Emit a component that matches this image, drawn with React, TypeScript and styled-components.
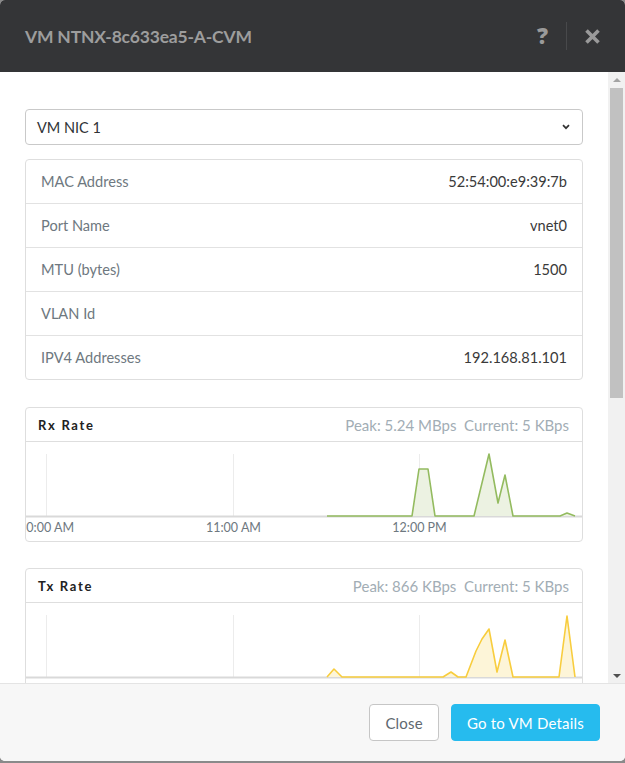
import React from 'react'
import styled, { createGlobalStyle } from 'styled-components'

interface IPoint {
  x: number,
  y: number
}

interface IChart {
  title: string,
  peak: string,
  current: string,
  line: string,
  fill: string,
  points: Array<IPoint>
}

interface IRow {
  label: string,
  value: string
}

const GlobalStyle = createGlobalStyle`
  html, body {
    margin: 0;
    padding: 0;
    background: #8a8a8a;
  }
  body {
    font-family: Lato, "Open Sans", "Liberation Sans", sans-serif;
  }
`;

const Modal = styled.div`
  display: flex;
  flex-direction: column;
  width: 625px;
  height: 761px;
  background: #fff;
  border-radius: 5px;
  overflow: hidden;
`;

const Header = styled.div`
  flex: 0 0 72px;
  display: flex;
  align-items: center;
  justify-content: space-between;
  background: #343537;
  padding: 0 20px 0 25px;
`;

const Title = styled.div`
  color: #9d9d9d;
  font-size: 17.5px;
  font-weight: 700;
  letter-spacing: -0.2px;
`;

const HeaderActions = styled.div`
  display: flex;
  align-items: center;
  height: 100%;
`;

const HelpIcon = styled.span`
  color: #9a9a9a;
  font-family: "Open Sans", sans-serif;
  font-size: 22px;
  font-weight: 800;
  padding: 0 18px 2px 0;
`;

const Divider = styled.div`
  width: 1px;
  height: 28px;
  background: #48494b;
`;

const CloseIcon = styled.div`
  display: flex;
  padding: 0 4px 0 17px;
`;

const Body = styled.div`
  flex: 1;
  display: flex;
  min-height: 0;
`;

const Content = styled.div`
  flex: 1;
  overflow: hidden;
  padding: 37px 25px 0 25px;
  display: flex;
  flex-direction: column;
`;

const ScrollTrack = styled.div`
  flex: 0 0 17px;
  display: flex;
  flex-direction: column;
  background: #f1f1f1;
`;

const ScrollArrow = styled.div<{ down?: boolean }>`
  flex: 0 0 15px;
  display: flex;
  align-items: center;
  justify-content: center;
  &::before {
    content: '';
    border-left: 4px solid transparent;
    border-right: 4px solid transparent;
    border-${props => props.down ? 'top' : 'bottom'}: 4px solid ${props => props.down ? '#505050' : '#a3a3a3'};
  }
`;

const ScrollThumb = styled.div`
  flex: 0 0 310px;
  margin: 1px 2px 0 2px;
  background: #c1c1c1;
`;

const ScrollRest = styled.div`
  flex: 1;
`;

const Select = styled.div`
  display: flex;
  align-items: center;
  justify-content: space-between;
  flex: 0 0 auto;
  height: 34px;
  border: 1px solid #c9c9c9;
  border-radius: 4px;
  padding: 0 12px 0 11px;
  color: #2f3336;
  font-size: 14.5px;
`;

const InfoCard = styled.div`
  flex: 0 0 auto;
  margin-top: 14px;
  border: 1px solid #dedede;
  border-radius: 4px;
`;

const InfoRow = styled.div`
  display: flex;
  align-items: center;
  justify-content: space-between;
  height: 43px;
  padding: 0 15px;
  font-size: 14.6px;
  & + & {
    border-top: 1px solid #e2e2e2;
  }
`;

const RowLabel = styled.span`
  color: #6e7880;
`;

const RowValue = styled.span`
  color: #3a3a3a;
`;

const ChartCard = styled.div`
  flex: 0 0 auto;
  margin-top: 27px;
  border: 1px solid #dedede;
  border-radius: 4px;
  overflow: hidden;
  & + & {
    margin-top: 26px;
  }
`;

const ChartHeader = styled.div`
  display: flex;
  align-items: center;
  justify-content: space-between;
  height: 33px;
  padding: 0 13px 0 12px;
  border-bottom: 1px solid #dedede;
`;

const ChartTitle = styled.span`
  color: #222;
  font-size: 13px;
  font-weight: 700;
  letter-spacing: 1.7px;
`;

const ChartStats = styled.span`
  color: #a2adb5;
  font-size: 15px;
  white-space: pre;
`;

const ChartArea = styled.svg`
  display: block;
`;

const Footer = styled.div`
  flex: 0 0 77px;
  display: flex;
  align-items: center;
  justify-content: flex-end;
  gap: 12px;
  padding: 0 25px;
  background: #f7f7f7;
  border-top: 1px solid #e4e4e4;
`;

const Button = styled.button<{ primary?: boolean }>`
  height: 37px;
  padding: 0 15px;
  border-radius: 4px;
  border: 1px solid ${props => props.primary ? '#26bbee' : '#c6c6c6'};
  background: ${props => props.primary ? '#26bbee' : '#fff'};
  color: ${props => props.primary ? '#fff' : '#60686f'};
  font-family: Lato, "Open Sans", sans-serif;
  font-size: 15px;
  letter-spacing: 0.2px;
`;

const rows: Array<IRow> = [
  { label: 'MAC Address', value: '52:54:00:e9:39:7b' },
  { label: 'Port Name', value: 'vnet0' },
  { label: 'MTU (bytes)', value: '1500' },
  { label: 'VLAN Id', value: '' },
  { label: 'IPV4 Addresses', value: '192.168.81.101' }
];

const pts = (list: Array<[number, number]>) => list.map(([x, y]) => ({ x, y }));

const charts: Array<IChart> = [
  {
    title: 'Rx Rate',
    peak: '5.24 MBps',
    current: '5 KBps',
    line: '#93bb5f',
    fill: '#ecf2e2',
    points: pts([[301, 74], [386, 74], [393, 27], [402, 27], [409, 74], [448, 74], [463, 12], [472, 61], [479, 33], [487, 74], [534, 74], [541, 71], [549, 74]])
  },
  {
    title: 'Tx Rate',
    peak: '866 KBps',
    current: '5 KBps',
    line: '#f8cd3e',
    fill: '#fdf5d8',
    points: pts([[301, 74], [308, 66], [316, 74], [417, 74], [425, 69], [432, 74], [440, 74], [450, 48], [456, 36], [463, 26], [471, 69], [479, 37], [487, 74], [533, 74], [541, 13], [549, 74]])
  }
];

const gridX = [20, 207, 393];
const ticks = ['10:00 AM', '11:00 AM', '12:00 PM'];

const renderChart = (chart: IChart) => {
  const line = chart.points.map(p => `${p.x},${p.y}`).join(' ');
  const first = chart.points[0];
  const last = chart.points[chart.points.length - 1];
  const area = `M${first.x},74 L${line.split(' ').join(' L')} L${last.x},74 Z`;
  return <ChartCard key={chart.title}>
    <ChartHeader>
      <ChartTitle>{chart.title}</ChartTitle>
      <ChartStats>{`Peak: ${chart.peak}  Current: ${chart.current}`}</ChartStats>
    </ChartHeader>
    <ChartArea width="556" height="99" viewBox="0 0 556 99">
      {gridX.map(x => <line key={x} x1={x + 0.5} y1="12" x2={x + 0.5} y2="74" stroke="#ececec" strokeWidth="1" />)}
      <line x1="0" y1="74.5" x2="556" y2="74.5" stroke="#d9d9d9" strokeWidth="2" />
      <path d={area} fill={chart.fill} />
      <polyline points={line} fill="none" stroke={chart.line} strokeWidth="1.6" strokeLinejoin="round" />
      {gridX.map((x, i) => <text key={ticks[i]} x={x + 0.5} y="90" textAnchor="middle" fontSize="12.5" fill="#6e7880" fontFamily="Lato, sans-serif">{ticks[i]}</text>)}
    </ChartArea>
  </ChartCard>
}

const App = () => {
  return (
    <>
      <GlobalStyle />
      <Modal>
        <Header>
          <Title>VM NTNX-8c633ea5-A-CVM</Title>
          <HeaderActions>
            <HelpIcon>?</HelpIcon>
            <Divider />
            <CloseIcon>
              <svg width="17" height="17" viewBox="0 0 17 17">
                <path d="M2.5 2.5 L14.5 14.5 M14.5 2.5 L2.5 14.5" stroke="#9a9a9a" strokeWidth="3.6" strokeLinecap="butt" />
              </svg>
            </CloseIcon>
          </HeaderActions>
        </Header>
        <Body>
          <Content>
            <Select>
              <span>VM NIC 1</span>
              <svg width="8" height="6" viewBox="0 0 8 6">
                <path d="M1 1.2 L4 4.2 L7 1.2" fill="none" stroke="#333" strokeWidth="1.7" />
              </svg>
            </Select>
            <InfoCard>
              {rows.map(row => <InfoRow key={row.label}>
                <RowLabel>{row.label}</RowLabel>
                <RowValue>{row.value}</RowValue>
              </InfoRow>)}
            </InfoCard>
            {charts.map(renderChart)}
          </Content>
          <ScrollTrack>
            <ScrollArrow />
            <ScrollThumb />
            <ScrollRest />
            <ScrollArrow down />
          </ScrollTrack>
        </Body>
        <Footer>
          <Button>Close</Button>
          <Button primary>Go to VM Details</Button>
        </Footer>
      </Modal>
    </>
  )
}

export default App;
